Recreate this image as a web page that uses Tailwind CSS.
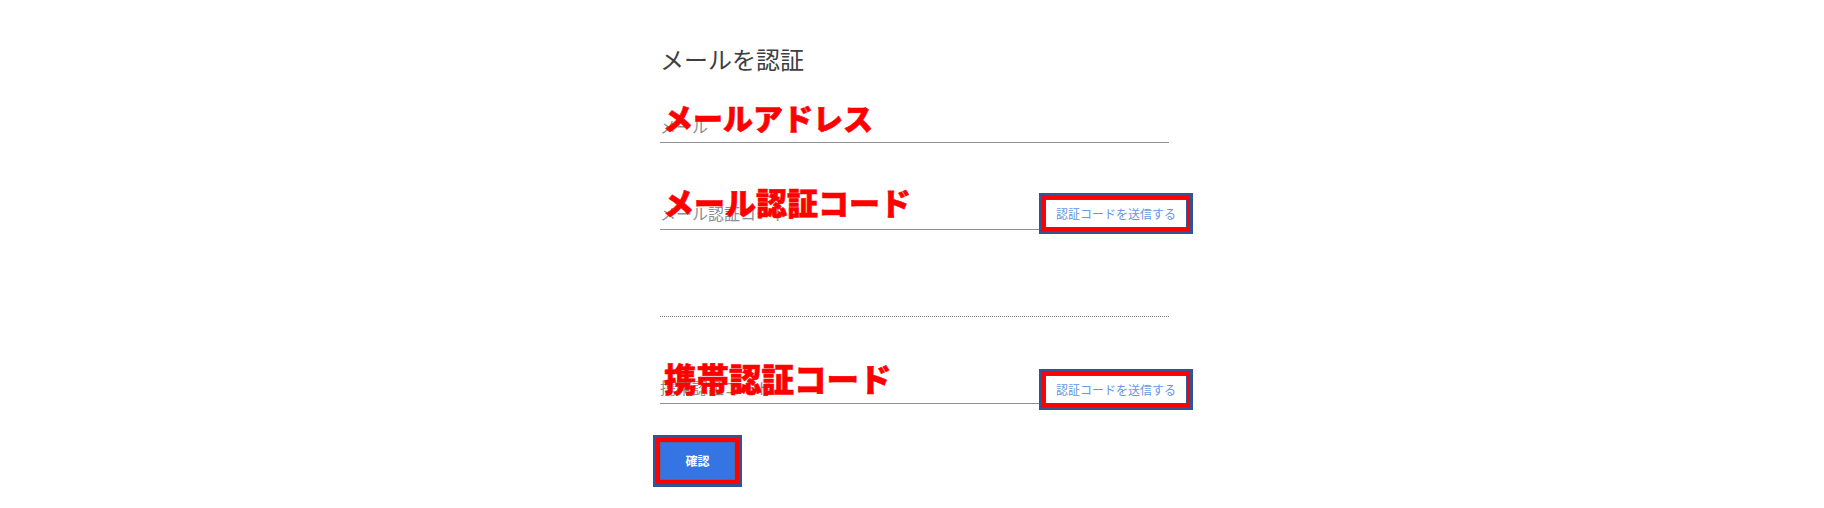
<!DOCTYPE html>
<html lang="ja">
<head>
<meta charset="utf-8">
<title>メールを認証</title>
<script src="https://cdn.jsdelivr.net/npm/@tailwindcss/browser@4"></script>
</head>
<body class="bg-white font-['Noto_Sans_CJK_JP','Noto_Sans',sans-serif]">
<main class="w-[1824px] h-[508px] overflow-hidden pl-[660px] pt-[42px]">
  <div class="w-[509px]">
    <h1 class="h-[35px] text-[24px] leading-[34px] font-normal text-[#3c4043]">メールを認証</h1>
    <div class="relative h-[66px] border-b border-[#8f8f8f] flex items-end pb-[4px]">
      <span class="text-[16px] leading-6 text-[#8a8f96]">メール</span>
      <span class="absolute left-[3px] top-[18px] text-[30px] leading-[44px] font-black text-[#ff0000] [-webkit-text-stroke:0.6px_#ff0000] whitespace-nowrap">メールアドレス</span>
    </div>
    <div class="relative h-[87px] border-b border-[#8f8f8f] flex items-end pb-[4px]">
      <span class="text-[16px] leading-6 text-[#8a8f96]">メール認証コード</span>
      <span class="absolute left-[3px] top-[36px] text-[31px] leading-[46px] font-black text-[#ff0000] [-webkit-text-stroke:0.6px_#ff0000] whitespace-nowrap">メール認証コード</span>
      <div class="absolute left-[379px] top-[50px] w-[154px] h-[41px] border-[3px] border-[#2f5597]">
        <div class="h-full border-[3px] border-[#ff0000]">
          <button class="w-full h-full bg-white border border-[#2f5597] text-[12px] leading-none text-[#6a95e6]">認証コードを送信する</button>
        </div>
      </div>
    </div>
    <div class="h-[87px] border-b border-dotted border-[#777777]"></div>
    <div class="relative h-[87px] border-b border-[#8f8f8f] flex items-end pb-[4px]">
      <span class="text-[16px] leading-6 text-[#8a8f96]">携帯認証コード</span>
      <span class="absolute left-[4px] top-[38px] text-[32.5px] leading-[46px] font-black text-[#ff0000] [-webkit-text-stroke:0.6px_#ff0000] whitespace-nowrap">携帯認証コード</span>
      <div class="absolute left-[379px] top-[52px] w-[154px] h-[41px] border-[3px] border-[#2f5597]">
        <div class="h-full border-[3px] border-[#ff0000]">
          <button class="w-full h-full bg-white border border-[#2f5597] text-[12px] leading-none text-[#6a95e6]">認証コードを送信する</button>
        </div>
      </div>
    </div>
    <div class="mt-[31px] -ml-[7px] w-[89px] h-[52px] border-[3px] border-[#2f5597]">
      <div class="h-full border-[4px] border-[#ff0000]">
        <button class="w-full h-full bg-[#3574e3] border border-[#4a6aa8] text-[12px] leading-none font-bold text-white">確認</button>
      </div>
    </div>
  </div>
</main>
</body>
</html>
